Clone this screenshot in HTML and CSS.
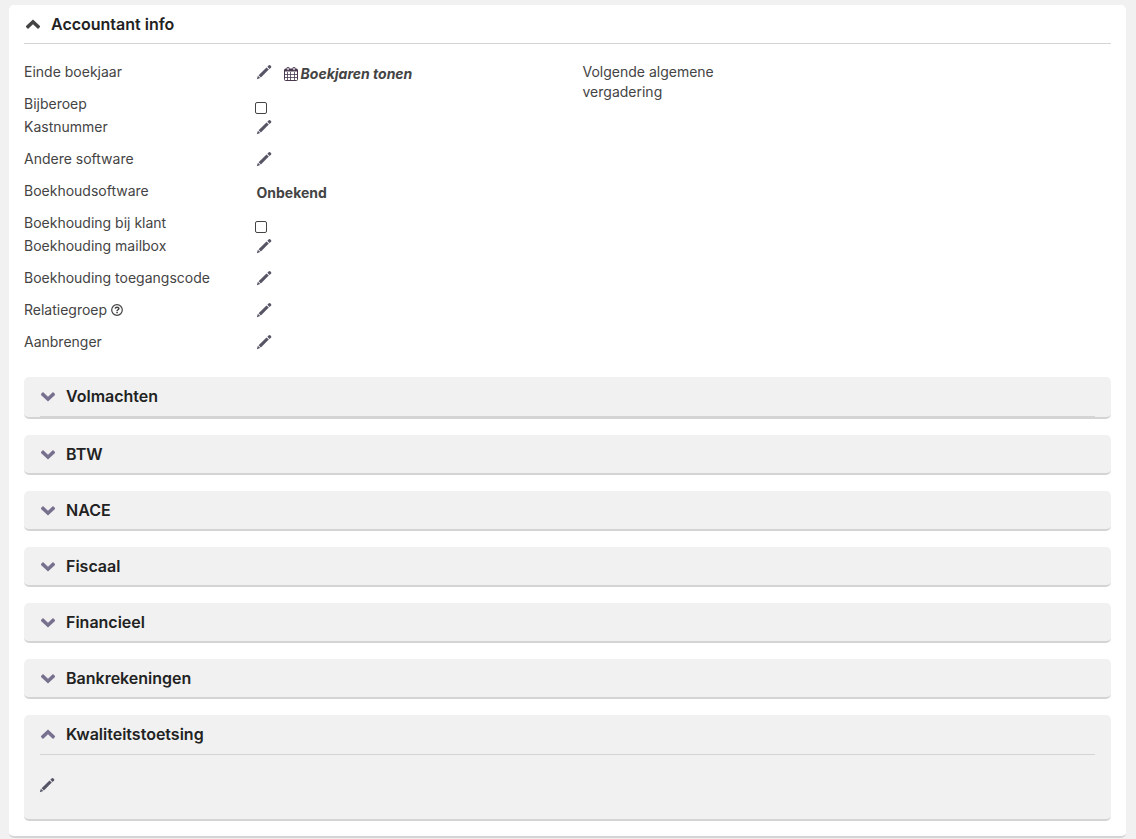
FILE: index.html
```html
<!DOCTYPE html>
<html lang="nl">
<head>
    <meta charset="UTF-8">
    <meta name="viewport" content="width=device-width, initial-scale=1.0">
    <title>Accountant info</title>
    <link rel="stylesheet" href="styles.css">
</head>
<body>
    <!-- Iconen -->
    <svg class="sprite" aria-hidden="true">
        <symbol id="icon-down" viewBox="0 0 14 14">
            <path d="M0 5L2 3L7 7.800L12 3L14 5L14 6L7 12.400L0 6Z" fill="currentColor"/>
        </symbol>
        <symbol id="icon-up" viewBox="0 0 14 14">
            <path d="M0 10L2 12L7 7.200L12 12L14 10L14 9L7 2.600L0 9Z" fill="currentColor"/>
        </symbol>
        <symbol id="icon-pencil" viewBox="0 0 16 16">
            <path d="M.8 15.200L1.900 11.800L4.200 14.100Z" fill="currentColor"/>
            <path d="M2.600 11.200L10.500 3.400L12.800 5.600L4.900 13.500Z" fill="currentColor"/>
            <path d="M11.300 2.700L12.800 1.300Q13.500 .7 14.200 1.300L15.100 2.200Q15.700 2.900 15.100 3.500L13.600 4.900Z" fill="currentColor"/>
        </symbol>
        <symbol id="icon-calendar" viewBox="0 0 14 14">
            <path d="M1.500 2H12.500Q13.500 2 13.500 3V12.500Q13.500 13.500 12.500 13.500H1.500Q.5 13.500 .5 12.500V3Q.5 2 1.500 2Z" fill="#fff" stroke="currentColor"/>
            <path d="M1 2H13V4.500H1Z" fill="currentColor"/>
            <path d="M3.500 5V13M6.500 5V13M10.500 5V13M1 7.500H13M1 10.500H13" fill="none" stroke="currentColor" stroke-width=".8"/>
            <path d="M3 .5H5V3.500H3ZM9 .5H11V3.500H9Z" fill="#fff" stroke="currentColor" stroke-width=".8"/>
        </symbol>
        <symbol id="icon-help" viewBox="0 0 12 12">
            <circle cx="6" cy="6" r="5.300" fill="none" stroke="currentColor" stroke-width="1.200"/>
            <path d="M4.200 4.700Q4.400 3.200 6 3.200Q7.900 3.200 7.900 4.600Q7.900 5.300 6.900 5.800Q6.100 6.200 6.100 7" fill="none" stroke="currentColor" stroke-width="1.500"/>
            <path d="M5.300 7.800H6.900V9.200H5.300Z" fill="currentColor"/>
        </symbol>
    </svg>

    <main class="card">
        <h2 class="card-header">
            <button type="button" class="toggle" aria-expanded="true">
                <svg class="icon-chevron"><use href="#icon-up"/></svg>Accountant info
            </button>
        </h2>

        <div class="fields">
            <div class="column">
                <div class="field">
                    <span class="name">Einde boekjaar</span>
                    <div class="value">
                        <button type="button" class="edit" aria-label="Einde boekjaar bewerken"><svg><use href="#icon-pencil"/></svg></button>
                        <a href="#" class="years"><svg><use href="#icon-calendar"/></svg>Boekjaren tonen</a>
                    </div>
                </div>
                <div class="field field-check">
                    <label class="name" for="bijberoep">Bijberoep</label>
                    <div class="value"><input type="checkbox" id="bijberoep"></div>
                </div>
                <div class="field">
                    <span class="name">Kastnummer</span>
                    <div class="value"><button type="button" class="edit" aria-label="Kastnummer bewerken"><svg><use href="#icon-pencil"/></svg></button></div>
                </div>
                <div class="field">
                    <span class="name">Andere software</span>
                    <div class="value"><button type="button" class="edit" aria-label="Andere software bewerken"><svg><use href="#icon-pencil"/></svg></button></div>
                </div>
                <div class="field">
                    <span class="name">Boekhoudsoftware</span>
                    <div class="value"><strong>Onbekend</strong></div>
                </div>
                <div class="field field-check">
                    <label class="name" for="bij-klant">Boekhouding bij klant</label>
                    <div class="value"><input type="checkbox" id="bij-klant"></div>
                </div>
                <div class="field">
                    <span class="name">Boekhouding mailbox</span>
                    <div class="value"><button type="button" class="edit" aria-label="Boekhouding mailbox bewerken"><svg><use href="#icon-pencil"/></svg></button></div>
                </div>
                <div class="field">
                    <span class="name">Boekhouding toegangscode</span>
                    <div class="value"><button type="button" class="edit" aria-label="Boekhouding toegangscode bewerken"><svg><use href="#icon-pencil"/></svg></button></div>
                </div>
                <div class="field">
                    <span class="name">Relatiegroep <svg class="icon-help"><use href="#icon-help"/></svg></span>
                    <div class="value"><button type="button" class="edit" aria-label="Relatiegroep bewerken"><svg><use href="#icon-pencil"/></svg></button></div>
                </div>
                <div class="field">
                    <span class="name">Aanbrenger</span>
                    <div class="value"><button type="button" class="edit" aria-label="Aanbrenger bewerken"><svg><use href="#icon-pencil"/></svg></button></div>
                </div>
            </div>
            <div class="column">
                <div class="field">
                    <span class="name">Volgende algemene vergadering</span>
                </div>
            </div>
        </div>

        <div class="panels">
            <section class="panel">
                <h3 class="panel-header divided"><button type="button" class="toggle" aria-expanded="false"><svg class="icon-chevron"><use href="#icon-down"/></svg>Volmachten</button></h3>
            </section>
            <section class="panel">
                <h3 class="panel-header"><button type="button" class="toggle" aria-expanded="false"><svg class="icon-chevron"><use href="#icon-down"/></svg>BTW</button></h3>
            </section>
            <section class="panel">
                <h3 class="panel-header"><button type="button" class="toggle" aria-expanded="false"><svg class="icon-chevron"><use href="#icon-down"/></svg>NACE</button></h3>
            </section>
            <section class="panel">
                <h3 class="panel-header"><button type="button" class="toggle" aria-expanded="false"><svg class="icon-chevron"><use href="#icon-down"/></svg>Fiscaal</button></h3>
            </section>
            <section class="panel">
                <h3 class="panel-header"><button type="button" class="toggle" aria-expanded="false"><svg class="icon-chevron"><use href="#icon-down"/></svg>Financieel</button></h3>
            </section>
            <section class="panel">
                <h3 class="panel-header"><button type="button" class="toggle" aria-expanded="false"><svg class="icon-chevron"><use href="#icon-down"/></svg>Bankrekeningen</button></h3>
            </section>
            <section class="panel">
                <h3 class="panel-header divided"><button type="button" class="toggle" aria-expanded="true"><svg class="icon-chevron"><use href="#icon-up"/></svg>Kwaliteitstoetsing</button></h3>
                <div class="panel-body">
                    <button type="button" class="edit" aria-label="Kwaliteitstoetsing bewerken"><svg><use href="#icon-pencil"/></svg></button>
                </div>
            </section>
        </div>
    </main>
</body>
</html>
```

FILE: styles.css
```css
* {
    box-sizing: border-box;
    margin: 0;
    padding: 0;
}

body {
    font-family: Inter, "Liberation Sans", sans-serif;
    font-size: 14px;
    line-height: 20px;
    color: #444;
    background: #f1f1f1;
    padding: 5px 10px 2px 9px;
}

.sprite {
    display: none;
}

.card {
    background: #fff;
    border-bottom: 2px solid #d4d4d4;
    border-radius: 5px;
    padding: 0 15px 15px;
}

.card-header {
    display: flex;
    align-items: center;
    height: 39px;
    border-bottom: 1px solid #d4d4d4;
}

.toggle {
    display: flex;
    align-items: center;
    gap: 11px;
    border: none;
    background: none;
    font-family: inherit;
    font-size: 16px;
    font-weight: 600;
    line-height: 20px;
    color: #222;
    cursor: pointer;
}

.icon-chevron {
    width: 14px;
    height: 14px;
    color: #77708f;
}

.card-header .toggle {
    padding-left: 2px;
}

.card-header .icon-chevron {
    color: #444;
}

.fields {
    display: grid;
    grid-template-columns: 1fr 1fr;
    gap: 30px;
    padding: 18px 0 13px;
}

.field {
    display: grid;
    grid-template-columns: 44% 1fr;
    align-items: start;
    min-height: 32px;
}

.field-check {
    min-height: 23px;
}

.name {
    padding-right: 30px;
}

.value {
    display: flex;
    gap: 12px;
    padding-top: 2px;
}

.field-check .value {
    padding-top: 8px;
}

.edit {
    display: flex;
    height: 18px;
    margin-left: -1px;
    border: none;
    background: none;
    color: #555566;
    cursor: pointer;
}

.edit svg {
    width: 16px;
    height: 16px;
}

.years {
    display: flex;
    align-items: center;
    gap: 3px;
    font-weight: 700;
    font-style: italic;
    color: #444;
    text-decoration: none;
}

.years svg {
    width: 14px;
    height: 14px;
    color: #49384f;
}

.icon-help {
    width: 12px;
    height: 12px;
    vertical-align: -1px;
}

input[type="checkbox"] {
    appearance: none;
    width: 12px;
    height: 12px;
    margin-left: -2px;
    border: 1px solid #444;
    border-radius: 2px;
    background: #fff;
}

strong {
    font-weight: 700;
}

.panels {
    display: flex;
    flex-direction: column;
    gap: 16px;
}

.panel {
    background: #f1f1f1;
    border-bottom: 2px solid #d4d4d4;
    border-radius: 5px;
    padding: 0 16px;
}

.panel-header {
    display: flex;
    align-items: center;
    height: 38px;
}

.panel-header.divided {
    height: 40px;
    padding-bottom: 2px;
    border-bottom: 1px solid #d4d4d4;
}

.panel-header .toggle {
    padding-left: 1px;
}

.panel-body {
    padding: 22px 0 24px;
}
```
